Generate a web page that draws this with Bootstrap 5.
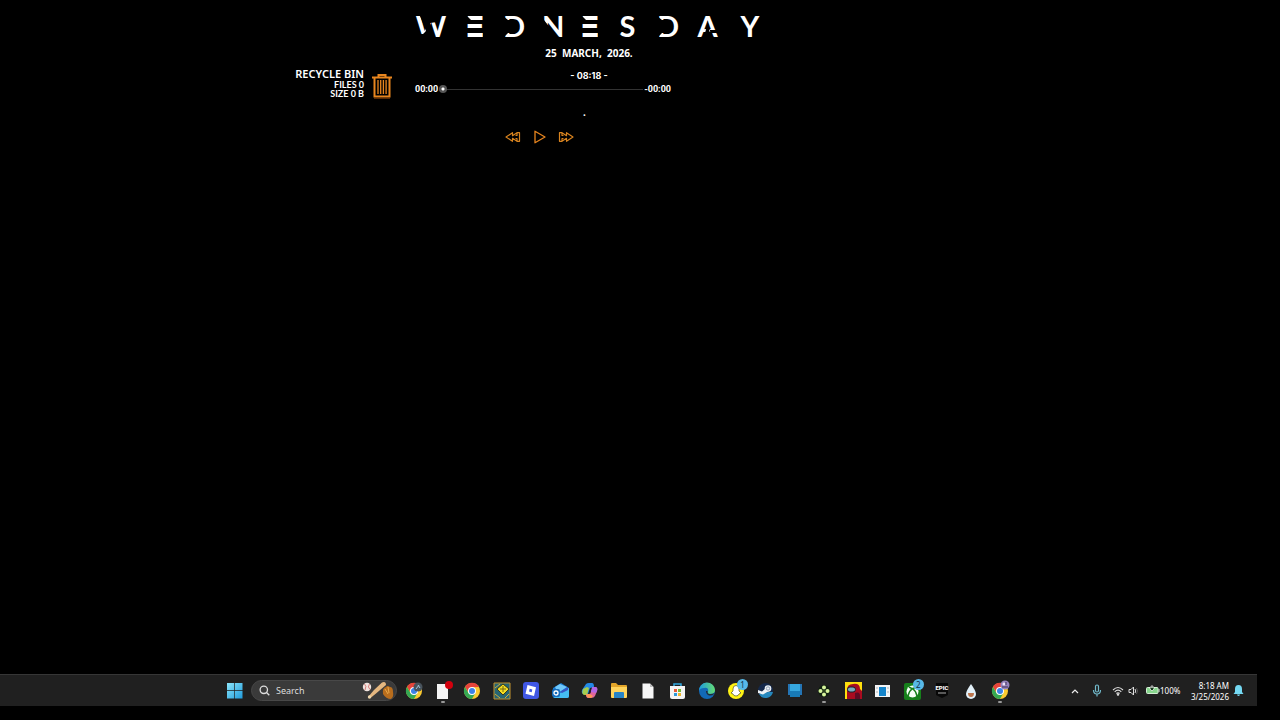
<!DOCTYPE html>
<html lang="en">
<head>
<meta charset="utf-8">
<meta name="viewport" content="width=device-width, initial-scale=1">
<title>Desktop</title>
<link href="https://cdn.jsdelivr.net/npm/bootstrap@5.3.0/dist/css/bootstrap.min.css" rel="stylesheet">
<style>
body{background:#000;color:#fff;font-family:"Noto Sans",sans-serif}
svg{display:block;flex:none}
.widgets{display:grid;grid-template-columns:415fr 348px 517fr;padding-top:11px}
/* weekday: stencil cuts are clipped out of ordinary letters */
.weekday{font:700 29px/30px Lato,sans-serif;margin:0;gap:20px;height:32px}
.weekday span{display:block;text-align:center;flex:none}
.l-w{width:32px}.l-e{width:16px}.l-d{width:19px}.l-n{width:20px}.l-s{width:19px}.l-a{width:23px}.l-y{width:22px}
.weekday .l-e{font-family:"DejaVu Sans",sans-serif;line-height:32px;display:flex;justify-content:center;clip-path:polygon(0 5px,0 0,100% 0,100% 100%,0 100%,0 22px,7px 22px,7px 17px,0 17px,0 13px,7px 13px,7px 9px,4px 9px)}
.l-d{clip-path:polygon(0 5px,26px 0,26px 100%,0 100%,0 27px,5px 22px,8px 22px,8px 9px,5px 9px)}
.l-n{clip-path:polygon(0 0,26px 0,26px 100%,15px 100%,15px 26px,2px 9px,0 5px)}
.l-w{clip-path:polygon(0 0,5px 0,5px 5px,8px 12px,15px 12px,22px 11px,22px 0,34px 0,34px 100%,20px 100%,15px 12px,8px 12px,11px 20px,8px 23px,0 23px)}
.l-a{clip-path:polygon(0 0,100% 0,100% 19px,13px 19px,14px 22px,100% 22px,100% 100%,17px 100%,12px 12px,6px 100%,0 100%)}
.date{font-size:10px;line-height:14px;font-weight:700;white-space:pre;margin-top:3px}
.clock{font:700 9px/14px Inter,sans-serif;margin-top:9px}
.player{width:256px}
.times{font:700 9px/12px Roboto,sans-serif;gap:1px}
.seek{appearance:none;flex:1;min-width:0;height:10px;margin:0;background:linear-gradient(#333,#333) center/100% 1px no-repeat}
.seek::-webkit-slider-thumb{appearance:none;width:8px;height:8px;border-radius:50%;background:radial-gradient(circle,#fff 0 1px,#555 2px 4px)}
.track-name{font-size:10px;line-height:12px;font-weight:700;margin-top:11px;padding-right:9px}
.controls{gap:10px;margin-top:12px;padding-right:7px}
.plain{background:none;border:0;padding:0;color:inherit}
.recycle{gap:7px;padding:57px 22px 0 0}
.bin-name{font-size:11px;line-height:12px;font-weight:600}
.bin-info{font:700 9px/9px Lato,sans-serif}
.taskbar{height:32px;margin:0 23px 14px 0;background:#202020;border-top:1px solid #363636}
.lead-space{flex:226 1 0;min-width:0}
.tray-space{flex:56 1 0;min-width:0}
.search{width:146px;height:21px;margin:0 2px 0 8px;border-radius:11px;background:#3a3a3a;border:1px solid #484848;padding:0 0 0 7px;gap:6px}
.search input{min-width:0;flex:1;background:none;border:0;outline:0;padding:0;color:#ddd;font-size:9px;height:18px}
.search input::placeholder{color:#ddd;opacity:1}
.apps{width:616px}
.apps button{flex:1 1 0;height:31px;display:flex;align-items:center;justify-content:center;position:relative}
.running::after{content:"";position:absolute;bottom:3px;width:4px;height:2px;border-radius:1px;background:#999}
.note{position:absolute;top:4px;right:3px;width:11px;height:11px;border-radius:50%;background:#58b9e8;color:#12324a;font-size:8px;line-height:11px}
.tray{flex:none;width:186px;font-size:8px;padding-right:13px}
.mic{margin:0 10px 0 13px}
.stamp{line-height:11px;text-align:right;font-size:8px}
</style>
</head>
<body class="min-vh-100 d-flex flex-column">
<svg width="0" height="0" class="position-absolute" aria-hidden="true">
<symbol id="chrome" viewBox="0 0 18 18"><circle cx="9" cy="9" r="8" fill="#fbca30"/><path d="M2 5A8 8 0 0 1 16 5L9 5.3 5.3 10Z" fill="#e6443b"/><path d="M2 5A8 8 0 0 0 9 17L12.4 11 5.5 11Z" fill="#35a853"/><circle cx="9" cy="9" r="4" fill="#fff"/><circle cx="9" cy="9" r="3" fill="#3b82e8"/></symbol>
</svg>
<main class="widgets flex-grow-1">
  <section class="recycle d-flex justify-content-end align-items-start">
    <div class="text-end"><div class="bin-name">RECYCLE BIN</div><div class="bin-info">FILES 0<br>SIZE 0 B</div></div>
    <button class="plain mt-1" aria-label="Open recycle bin"><svg width="22" height="28" viewBox="0 0 22 28" fill="none" stroke="#e8851e"><path d="M1 5.500H21M7.500 5V3H14.500V5" stroke-width="2"/><path d="M3.500 5V24.500H18.500V5" stroke-width="2"/><path d="M7 8V22M9.700 8V22M12.400 8V22M15.100 8V22" stroke-width="1.300"/><path d="M3 26.500H19" stroke="#5a2800"/></svg></button>
  </section>
  <section>
    <h1 class="weekday d-flex"><span class="l-w">W</span><span class="l-e">E</span><span class="l-d">D</span><span class="l-n">N</span><span class="l-e">E</span><span class="l-s">S</span><span class="l-d">D</span><span class="l-a">A</span><span class="l-y">Y</span></h1>
    <div class="date text-center">25  MARCH,  2026.</div>
    <div class="clock text-center">- 08:18 -</div>
    <div class="player">
      <div class="times d-flex align-items-center"><span>00:00</span><input class="seek" type="range" value="0" aria-label="Track position"><span>-00:00</span></div>
    </div>
    <div class="track-name text-center">.</div>
    <div class="player controls d-flex justify-content-center">
      <button class="plain" aria-label="Previous"><svg width="16" height="14" viewBox="0 0 16 14" fill="none" stroke="#d9841f" stroke-width="1.200" stroke-linejoin="round"><path d="M1 7L7.500 2.700V5.700L12 2.700H14.500V11.300H12L7.500 8.300V11.300ZM12 3V5.500H10.500M12 11V8.500H10.500"/></svg></button>
      <button class="plain" aria-label="Play"><svg width="17" height="14" viewBox="0 0 17 14" fill="none" stroke="#e8851e" stroke-width="1.300" stroke-linejoin="round"><path d="M4 1.200V12.800L14 7Z"/></svg></button>
      <button class="plain" aria-label="Next"><svg width="16" height="14" viewBox="0 0 16 14" fill="none" stroke="#d9841f" stroke-width="1.200" stroke-linejoin="round"><path d="M15 7L8.500 2.700V5.700L4 2.700H1.500V11.300H4L8.500 8.300V11.300ZM4 3V5.500H5.500M4 11V8.500H5.500"/></svg></button>
    </div>
  </section>
</main>
<footer class="taskbar d-flex align-items-center">
  <div class="lead-space"></div>
  <button class="plain" aria-label="Start"><svg width="17" height="17" viewBox="0 0 17 17"><defs><linearGradient id="win" x2="1" y2="1"><stop stop-color="#8be6fb"/><stop offset="1" stop-color="#209bdc"/></linearGradient></defs><path d="M1 1H8.300V8.300H1ZM9 1H16.500V8.300H9ZM1 9H8.300V16.500H1ZM9 9H16.500V16.500H9Z" fill="url(#win)"/></svg></button>
  <div class="search d-flex align-items-center">
    <svg width="11" height="11" viewBox="0 0 11 11" fill="none" stroke="#ddd" stroke-width="1.300"><circle cx="4.800" cy="4.800" r="3.700"/><path d="M7.500 7.500L10.300 10.300"/></svg>
    <input type="text" placeholder="Search" aria-label="Search">
    <svg width="34" height="19" viewBox="0 0 34 19"><circle cx="5" cy="6" r="4.200" fill="#f1e4df"/><path d="M2.500 3Q5 5 3 9M7.500 3Q5 6 8 8.500" fill="none" stroke="#c95150" stroke-width=".7"/><path d="M6.500 15.500L12 9 20 1.500Q24 0 24 4L14 12.500 8.500 17Z" fill="#e4b780"/><circle cx="7.500" cy="16" r="1.700" fill="#ecd5ac"/><path d="M21 13Q20 7 24 6 25 4 28 6 31 6 31 11 32 16 29 18 24 18 21 13Z" fill="#b86d1d"/><path d="M23 8L26 13M26 6L27 12" stroke="#e8a94a"/></svg>
  </div>
  <nav class="apps d-flex" aria-label="Taskbar apps">
    <button class="plain" aria-label="Chrome profile"><svg width="18" height="18"><use href="#chrome"/><circle cx="13" cy="5" r="4.500" fill="#48535c"/><path d="M11 7L14 3M13 3L15 6" stroke="#9fc1d8"/></svg></button>
    <button class="plain running" aria-label="Document with alert"><svg width="20" height="20" viewBox="0 0 20 20"><path d="M4 3H15V18H4Z" fill="#f4f4f4"/><circle cx="16" cy="4" r="4" fill="#d4000d"/></svg></button>
    <button class="plain" aria-label="Chrome"><svg width="18" height="18"><use href="#chrome"/></svg></button>
    <button class="plain" aria-label="Game"><svg width="18" height="18" viewBox="0 0 18 18"><path d="M1 1H17V17H1Z" fill="#276674" stroke="#c3942f"/><path d="M2 6L7 2M2 12L7 16M12 16L16 12" stroke="#d2ae38"/><path d="M10 2L16 7 10 13 4 7Z" fill="#f5df22" stroke="#403b13"/><path d="M10 4V10M7 7H13" stroke="#776913"/></svg></button>
    <button class="plain" aria-label="Roblox"><svg width="16" height="17" viewBox="0 0 16 17"><rect width="16" height="17" rx="3" fill="#4057e5"/><path d="M4.500 3L13 5.300 11 14 2.500 11.700Z" fill="#fff"/><path d="M6.700 6.800L9.300 7.500 8.700 10.200 6 9.500Z" fill="#4057e5"/></svg></button>
    <button class="plain" aria-label="Mail"><svg width="17" height="17" viewBox="0 0 17 17"><path d="M1 6L9 1 17 6V14Q17 16 15 16H3Q1 16 1 14Z" fill="#197bd0"/><path d="M3 5L8 2 15 5 6 11Z" fill="#70c8fa"/><path d="M1 15L17 6V14Q17 16 15 16H3Z" fill="#45bdf3"/><path d="M8 10L16 5V8L10 11Z" fill="#3755c4"/><rect y="7" width="8" height="8" rx="2" fill="#146bbb"/><circle cx="4" cy="11" r="2" fill="none" stroke="#fff" stroke-width="1.300"/></svg></button>
    <button class="plain" aria-label="Copilot"><svg width="17" height="17" viewBox="0 0 17 17"><path d="M5 2Q6 1 8 1H11Q13 1 13 5L9 6 7 12Q6 13 3 12 0 12 1 8Z" fill="#2389e8"/><path d="M2 7L6 5 8 6 6 13H4Q0 13 2 7Z" fill="#a6cd4f"/><path d="M12 5H15Q17 6 16 9L14 14Q13 16 10 16H7Q5 16 5 12H8Q10 12 10 9Z" fill="#df659d"/><path d="M11 5H15Q17 6 16 9L15 11 10 10Z" fill="#b166e5"/><path d="M5 12H9L12 14Q11 16 9 16Q5 16 5 12Z" fill="#ff9656"/></svg></button>
    <button class="plain" aria-label="File Explorer"><svg width="18" height="17" viewBox="0 0 18 17"><path d="M1 2Q1 1 2 1H6L8 3H16Q17 3 17 4V15H1Z" fill="#e3a529"/><path d="M1 5H17V15Q17 16 16 16H2Q1 16 1 15Z" fill="#ffd45d"/><path d="M4 16V11Q4 10 5 10H13Q14 10 14 11V16Z" fill="#2784c7"/></svg></button>
    <button class="plain" aria-label="Document"><svg width="14" height="18" viewBox="0 0 14 18"><path d="M1.500 1.500H9L12.500 5V16.500H1.500Z" fill="#f7f7f7"/><path d="M9 1.500V5H12.500" fill="#bbb"/></svg></button>
    <button class="plain" aria-label="Store"><svg width="17" height="18" viewBox="0 0 17 18"><path d="M5 5V2H12V5" fill="none" stroke="#31a8df" stroke-width="1.500"/><path d="M1 4H16V15Q16 17 14 17H3Q1 17 1 15Z" fill="#f4f4f4"/><path fill="#e85a36" d="M5 7H8V10H5Z"/><path fill="#75b739" d="M9 7H12V10H9Z"/><path fill="#2b98da" d="M5 11H8V14H5Z"/><path fill="#eeb52d" d="M9 11H12V14H9Z"/></svg></button>
    <button class="plain" aria-label="Edge"><svg width="18" height="18" viewBox="0 0 18 18"><defs><linearGradient id="edg" x2="1"><stop stop-color="#1c9be0"/><stop offset="1" stop-color="#65dc71"/></linearGradient></defs><circle cx="9" cy="9" r="8" fill="#1269b7"/><path d="M1 9A8 8 0 0 1 17 8Q17 12 12 12 9 12 10 10 11 5 6 6 2 6 1 9Z" fill="url(#edg)"/><path d="M8 9Q8 12 11 13.500 14 14 16 12L17 11Q15 12 12 12 9 12 9.500 9Z" fill="#202c38"/></svg></button>
    <button class="plain" aria-label="Snapchat, 1 new"><svg width="18" height="18" viewBox="0 0 18 18"><circle cx="9" cy="9" r="8" fill="#fff314"/><path d="M9 3.500Q12 3.500 12 7V9L14 11 12 12 11 13.500 9 14 7 13.500 6 12 4 11 6 9V7Q6 3.500 9 3.500Z" fill="#fff" stroke="#555122" stroke-width=".7"/></svg><span class="note">1</span></button>
    <button class="plain" aria-label="Steam"><svg width="17" height="17" viewBox="0 0 17 17"><circle cx="8.500" cy="8.500" r="7.500" fill="#14284a"/><path d="M2 12A7.500 7.500 0 0 0 16 10L11 10Z" fill="#2588bd"/><path d="M1 8L5 9.500 9 6 12 9 6 12.500 1 11Z" fill="#eef3f7"/><circle cx="11" cy="6.500" r="3.300" fill="#eef3f7"/><circle cx="11" cy="6.500" r="1.700" fill="none" stroke="#7286a2" stroke-width=".7"/></svg></button>
    <button class="plain" aria-label="Blue app"><svg width="16" height="17" viewBox="0 0 16 17"><path d="M1 2H15V13H1Z" fill="#2475b5"/><path d="M3 2H13V15H3Z" fill="#36a8df"/><path d="M3 9H13V15H3Z" fill="#187bb7"/></svg></button>
    <button class="plain running" aria-label="Clover app"><svg width="14" height="14" viewBox="0 0 14 14"><circle cx="7" cy="7" r="6" fill="#112011"/><g fill="#d7f49b"><circle cx="7" cy="3.500" r="2"/><circle cx="7" cy="10.500" r="2"/><circle cx="3.500" cy="7" r="2"/><circle cx="10.500" cy="7" r="2"/></g><circle cx="7" cy="7" r="1.200" fill="#29451d"/></svg></button>
    <button class="plain" aria-label="Among Us"><svg width="17" height="17" viewBox="0 0 17 17"><path d="M0 0H17V17H0Z" fill="#ffe00d"/><path d="M2 17V8Q2 2 8 2 15 1 15 7L17 9V17Z" fill="#a90b20"/><path d="M10 11Q15 9 15 14V17H10Z" fill="#5d0b24"/><rect x="2.500" y="5" width="8" height="5" rx="2.500" fill="#79abc0" stroke="#1c1e2a"/></svg></button>
    <button class="plain" aria-label="Window app"><svg width="17" height="14" viewBox="0 0 17 14"><path d="M1 1H16V13H1Z" fill="#f5f6f7"/><path d="M5 3H12V12H5Z" fill="#1585cb"/><path d="M2 4H4M2 8H4M13 4H15M13 8H15" stroke="#b5b5b5"/></svg></button>
    <button class="plain" aria-label="Xbox, 2 new"><svg width="17" height="18" viewBox="0 0 17 18"><rect y="1" width="17" height="17" rx="2" fill="#16801b"/><circle cx="8.500" cy="9.500" r="6" fill="#f6fff6"/><path d="M4 14Q5 9 8.500 6.500 12 9 13 14M5 5L8.500 7 12 5" fill="none" stroke="#16801b" stroke-width="1.500"/></svg><span class="note">2</span></button>
    <button class="plain" aria-label="Epic Games"><svg width="14" height="17" viewBox="0 0 14 17"><path d="M1 1H13V13L7 16 1 13Z" fill="#080808"/><text x="7" y="8" font-family="Roboto" font-size="6" font-weight="900" text-anchor="middle" fill="#fff">EPIC</text><path d="M3 11H11" stroke="#aaa"/></svg></button>
    <button class="plain" aria-label="Drop app"><svg width="14" height="18" viewBox="0 0 14 18"><path d="M7 2Q12 9 12 12A5 5 0 0 1 2 12Q2 9 7 2Z" fill="#e2f0f8"/><path d="M4 11H10Q10 15 7 15Q4 15 4 11Z" fill="#bb744c"/></svg></button>
    <button class="plain running" aria-label="Chrome second profile"><svg width="20" height="22" viewBox="0 0 20 22"><use href="#chrome" width="18" height="18" x="1" y="2"/><circle cx="15" cy="5" r="4.500" fill="#9582bd"/><circle cx="14" cy="4" r="1.500" fill="#efe4fa"/><path d="M12 7H18M16 2V5" stroke="#413557"/></svg></button>
  </nav>
  <div class="tray-space"></div>
  <div class="tray d-flex align-items-center">
    <button class="plain" aria-label="Hidden icons"><svg width="8" height="6" viewBox="0 0 8 6"><path d="M1 5L4 2 7 5" fill="none" stroke="#eee" stroke-width="1.200"/></svg></button>
    <button class="plain mic" aria-label="Microphone"><svg width="10" height="13" viewBox="0 0 10 13" fill="none" stroke="#72bacb" stroke-width="1.200"><rect x="3.500" y="1" width="3" height="7" rx="1.500"/><path d="M1.500 6Q1.500 10 5 10T8.500 6M5 10V12.500"/></svg></button>
    <button class="plain d-flex align-items-center" aria-label="Network, sound and battery"><svg width="12" height="10" viewBox="0 0 12 10" fill="none" stroke="#ddd" stroke-width="1.100"><path d="M1 4Q6-1 11 4M2.700 5.800Q6 2.500 9.300 5.800M4.400 7.500Q6 6 7.600 7.500"/><circle cx="6" cy="8.600" r=".7" fill="#ddd"/></svg>
    <svg class="ms-1" width="10" height="10" viewBox="0 0 10 10" fill="none" stroke="#ddd"><path d="M1 3.500H3L5.500 1V9L3 6.500H1Z"/><path d="M7 3Q8.500 5 7 7"/><path d="M8.500 2Q10.500 5 8.500 8" stroke="#555"/></svg>
    <svg class="ms-2" width="14" height="11" viewBox="0 0 14 11"><rect x=".5" y="2.500" width="11.500" height="6" rx="1" fill="#87d68d" stroke="#d4edd5"/><path d="M13 4V7" stroke="#d4edd5"/><path d="M6 0V3M4 2H8V4L6 6 4 4Z" stroke="#fff" fill="#183a1c" stroke-width=".7"/></svg><span>100%</span></button>
    <div class="stamp ms-auto">8:18 AM<br>3/25/2026</div>
    <button class="plain ms-1" aria-label="Notifications"><svg width="11" height="13" viewBox="0 0 11 13"><path d="M5.500 1Q9 1 9 5V8L10.500 10H.5L2 8V5Q2 1 5.500 1ZM4 10.500H7Q6.500 12 5.500 12T4 10.500Z" fill="#74d8f2"/></svg></button>
  </div>
</footer>
<script src="https://cdn.jsdelivr.net/npm/bootstrap@5.3.0/dist/js/bootstrap.bundle.min.js"></script>
</body>
</html>
